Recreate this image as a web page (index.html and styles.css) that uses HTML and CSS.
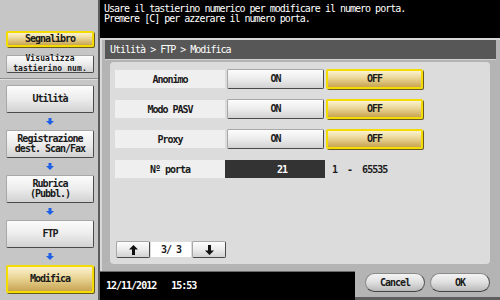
FILE: index.html
```html
<!DOCTYPE html>
<html lang="it">
<head>
<meta charset="utf-8">
<link rel="stylesheet" href="styles.css">
</head>
<body>
<div class="screen">
  <aside class="sidebar">
    <div class="bookmarks">
      <div class="btn btn-yellow bm">Segnalibro</div>
      <div class="btn btn-gray kp"><span>Visualizza<br>tastierino num.</span></div>
    </div>
    <div class="sep"></div>
    <div class="steps">
      <div class="btn btn-gray step">Utilità</div>
      <div class="arrow"><svg width="8" height="7" viewBox="0 0 8 7"><path d="M2.5 0h3v3H8L4 7 0 3h2.5z"/></svg></div>
      <div class="btn btn-gray step"><span>Registrazione<br>dest. Scan/Fax</span></div>
      <div class="arrow"><svg width="8" height="7" viewBox="0 0 8 7"><path d="M2.5 0h3v3H8L4 7 0 3h2.5z"/></svg></div>
      <div class="btn btn-gray step"><span>Rubrica<br>(Pubbl.)</span></div>
      <div class="arrow"><svg width="8" height="7" viewBox="0 0 8 7"><path d="M2.5 0h3v3H8L4 7 0 3h2.5z"/></svg></div>
      <div class="btn btn-gray step">FTP</div>
      <div class="arrow"><svg width="8" height="7" viewBox="0 0 8 7"><path d="M2.5 0h3v3H8L4 7 0 3h2.5z"/></svg></div>
      <div class="btn btn-yellow step">Modifica</div>
    </div>
  </aside>
  <main class="main">
    <div class="message">Usare il tastierino numerico per modificare il numero porta.<br>Premere [C] per azzerare il numero porta.</div>
    <section class="frame">
      <div class="title">Utilità &gt; FTP &gt; Modifica</div>
      <div class="panel">
        <div class="rows">
          <div class="row">
            <div class="label">Anonimo</div>
            <div class="btn btn-gray opt">ON</div>
            <div class="btn btn-yellow opt">OFF</div>
          </div>
          <div class="row">
            <div class="label">Modo PASV</div>
            <div class="btn btn-gray opt">ON</div>
            <div class="btn btn-yellow opt">OFF</div>
          </div>
          <div class="row">
            <div class="label">Proxy</div>
            <div class="btn btn-gray opt">ON</div>
            <div class="btn btn-yellow opt">OFF</div>
          </div>
          <div class="row">
            <div class="label">Nº porta</div>
            <div class="value">21</div>
            <div class="range">1 &nbsp;- &nbsp;65535</div>
          </div>
        </div>
        <div class="pager">
          <div class="btn btn-gray nav"><svg width="9" height="10" viewBox="0 0 9 10"><path d="M4.5 0L9 4.6H6V10H3V4.6H0z"/></svg></div>
          <div class="page">3/ 3</div>
          <div class="btn btn-gray nav"><svg width="9" height="10" viewBox="0 0 9 10"><path d="M4.5 10L9 5.4H6V0H3v5.4H0z"/></svg></div>
        </div>
      </div>
    </section>
    <footer class="bottom">
      <div class="status">12/11/2012 &nbsp;&nbsp;15:53</div>
      <div class="actions">
        <div class="pill">Cancel</div>
        <div class="pill">OK</div>
      </div>
    </footer>
  </main>
</div>
</body>
</html>
```

FILE: styles.css
```css
* {
  box-sizing: border-box;
  margin: 0;
  padding: 0;
}

html,
body {
  width: 500px;
  height: 300px;
  overflow: hidden;
  background: #000;
}

body {
  font-family: "DejaVu Sans Mono", "Liberation Mono", monospace;
  font-size: 10px;
  letter-spacing: -1px;
  color: #1a1a1a;
}

.screen {
  display: flex;
  width: 500px;
  height: 300px;
}

/* ---------- sidebar ---------- */
.sidebar {
  width: 100px;
  flex: none;
  background: #c6c6c6;
  border-right: 2px solid #5c5c5c;
  display: flex;
  flex-direction: column;
}

.bookmarks {
  padding: 31px 4px 0 6px;
  display: flex;
  flex-direction: column;
  gap: 8px;
}

.bm {
  height: 16px;
}

.kp {
  height: 18px;
  font-size: 8px;
  line-height: 6px;
  letter-spacing: 0.1px;
}

.sep {
  margin-top: 5px;
  height: 2px;
  border-top: 1px solid #8e8e8e;
  border-bottom: 1px solid #e0e0e0;
}

.steps {
  padding: 5px 4px 0 6px;
  display: flex;
  flex-direction: column;
}

.step {
  height: 28px;
}

.arrow {
  height: 17px;
  display: flex;
  align-items: center;
  justify-content: center;
  fill: #1d5fe6;
}

/* ---------- buttons ---------- */
.btn {
  display: flex;
  align-items: center;
  justify-content: center;
  text-align: center;
  font-weight: bold;
  line-height: 10px;
  color: #1a1a1a;
}

.btn-gray {
  background: linear-gradient(#fcfcfc, #ececec 50%, #d2d2d2);
  border: 1px solid #a8a8a8;
  border-right-color: #4a4a4a;
  border-bottom-color: #4a4a4a;
  border-radius: 2px;
}

.btn-yellow {
  background: linear-gradient(#fbf2d0, #ead596 45%, #c8a552);
  border: 2px solid #f5dc00;
  border-radius: 2px;
  box-shadow: 1px 1px 0 #6b5a20;
}

/* ---------- main ---------- */
.main {
  flex: 1;
  display: flex;
  flex-direction: column;
}

.message {
  height: 38px;
  padding: 4px 0 0 4px;
  color: #fff;
  line-height: 10px;
}

.frame {
  height: 233px;
  background: #b4b4b4;
  border-top: 2px solid #d8d8d8;
  border-left: 2px solid #d8d8d8;
  padding: 0 4px 7px 3px;
  display: flex;
  flex-direction: column;
}

.title {
  height: 20px;
  background: #575757;
  border-bottom: 1px solid #d0d0d0;
  color: #fff;
  padding-left: 5px;
  line-height: 19px;
}

.panel {
  margin: 2px 6px 0 5px;
  height: 202px;
  background: #dcdcdc;
  border-radius: 4px;
  display: flex;
  flex-direction: column;
  justify-content: space-between;
}

.rows {
  padding: 7px 0 0 5px;
  display: flex;
  flex-direction: column;
  gap: 10px;
}

.row {
  height: 20px;
  display: flex;
  align-items: center;
}

.label {
  width: 110px;
  height: 18px;
  background: #efefef;
  display: flex;
  align-items: center;
  justify-content: center;
  font-weight: bold;
}

.opt {
  height: 20px;
  width: 97px;
  margin-left: 2px;
}

.value {
  width: 100px;
  height: 18px;
  background: #333;
  color: #fff;
  display: flex;
  align-items: center;
  justify-content: center;
  padding-left: 14px;
  font-weight: bold;
}

.range {
  margin-left: 7px;
  font-weight: bold;
}

.pager {
  display: flex;
  align-items: center;
  margin: 0 0 6px 6px;
  height: 17px;
}

.nav {
  width: 34px;
  height: 17px;
  fill: #111;
}

.page {
  width: 40px;
  height: 15px;
  margin: 0 1px;
  background: #fff;
  display: flex;
  align-items: center;
  justify-content: center;
  font-weight: bold;
}

/* ---------- bottom ---------- */
.bottom {
  height: 29px;
  display: flex;
}

.status {
  width: 255px;
  background: #000;
  color: #fff;
  font-weight: bold;
  display: flex;
  align-items: center;
  padding: 0 0 1px 6px;
  border-top: 1px solid #6a6a6a;
}

.actions {
  flex: 1;
  background: #b4b4b4;
  display: flex;
  gap: 5px;
  padding: 2px 0 0 10px;
  border-bottom: 3px solid #5e5e5e;
}

.pill {
  width: 60px;
  height: 19px;
  border-radius: 10px;
  background: linear-gradient(#f4f4f4, #dedede 50%, #b8b8b8);
  border: 1px solid #8a8a8a;
  border-bottom-color: #444;
  border-right-color: #555;
  display: flex;
  align-items: center;
  justify-content: center;
  font-weight: bold;
}
```
